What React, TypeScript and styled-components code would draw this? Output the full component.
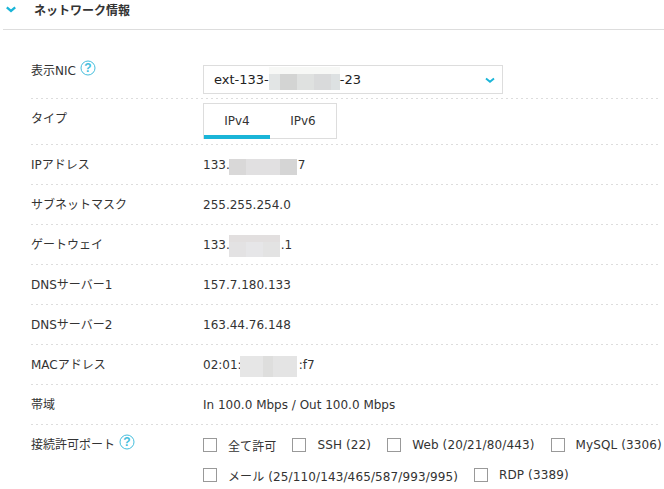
import React from 'react';
import styled, { createGlobalStyle } from 'styled-components';

const GlobalStyle = createGlobalStyle`
  html, body { margin: 0; padding: 0; background: #fff; }
  body {
    font-family: "DejaVu Sans", "Noto Sans CJK JP", sans-serif;
    font-size: 12px;
    color: #333;
  }
`;

const Page = styled.div`
  width: 664px;
  height: 489px;
  overflow: hidden;
`;

const Header = styled.div`
  display: flex;
  align-items: center;
  height: 30px;
  margin-left: 3px;
  padding-bottom: 11px;
  box-sizing: border-box;
  border-bottom: 1px solid #ddd;
`;

const HeaderIcon = styled.svg`
  width: 10px;
  height: 7px;
  margin-left: 3px;
`;

const Title = styled.h2`
  margin: 0 0 0 18px;
  font-size: 12px;
  font-weight: bold;
  color: #333;
`;

const Body = styled.div`
  padding: 25px 3px 0 31px;
`;

const Row = styled.div<{ $h: number; $last?: boolean }>`
  display: flex;
  height: ${(p) => p.$h}px;
  box-sizing: border-box;
  background: ${(p) =>
    p.$last ? 'none' : 'repeating-linear-gradient(90deg, #ddd 0 2px, transparent 2px 5px) bottom / 100% 1px no-repeat'};
`;

const Label = styled.div<{ $top?: number }>`
  display: flex;
  align-items: flex-start;
  width: 172px;
  flex-shrink: 0;
  padding-top: ${(p) => p.$top ?? 13}px;
  line-height: 14px;
`;

const HelpIcon = styled.svg`
  width: 16px;
  height: 16px;
  margin-left: 4px;
  margin-top: -4px;
`;

const Value = styled.div`
  display: flex;
  align-items: flex-start;
  padding-top: 13px;
  line-height: 14px;
  white-space: nowrap;
`;

const Select = styled.div`
  display: flex;
  align-items: center;
  justify-content: space-between;
  width: 300px;
  height: 29px;
  margin-top: -3px;
  padding: 0 7px 0 10px;
  box-sizing: border-box;
  border: 1px solid #ddd;
  font-size: 13px;
  color: #222;
`;

const SelectText = styled.span`
  display: flex;
`;

const SelectIcon = styled.svg`
  width: 10px;
  height: 7px;
  margin-top: 2px;
`;

const Tabs = styled.div`
  display: flex;
  width: 134px;
  height: 36px;
  margin-top: -9px;
  box-sizing: border-box;
  border: 1px solid #ddd;
`;

const Tab = styled.div<{ $active?: boolean }>`
  width: 66px;
  padding-top: 10px;
  box-sizing: border-box;
  text-align: center;
  border-bottom: 4px solid ${(p) => (p.$active ? '#1ab5d8' : 'transparent')};
  margin-bottom: -1px;
`;

// 個人情報のぼかし
const Redacted = styled.span<{ $w: number; $h: number; $top: number; $side?: number; $bg: string }>`
  display: inline-block;
  flex-shrink: 0;
  width: ${(p) => p.$w}px;
  height: ${(p) => p.$h}px;
  margin: ${(p) => p.$top}px ${(p) => p.$side ?? 0}px -20px ${(p) => -(p.$side ?? 0)}px;
  background: ${(p) => p.$bg};
`;

const Ports = styled.div`
  display: flex;
  flex-direction: column;
  gap: 14px;
  padding-top: 12px;
  letter-spacing: 0.12px;
`;

const PortLine = styled.div`
  display: flex;
  align-items: center;
  height: 16px;
`;

const Port = styled.label`
  display: flex;
  align-items: center;
  margin-right: 16px;
  white-space: nowrap;
`;

const Box = styled.span`
  width: 14px;
  height: 14px;
  margin-right: 11px;
  box-sizing: border-box;
  border: 1px solid #999;
`;

const Help = () => (
  <HelpIcon viewBox="0 0 16 16">
    <circle cx="8" cy="8" r="7" fill="none" stroke="#45bedd" strokeWidth="1" />
    <text x="8" y="12.4" fontSize="12" fontWeight="bold" fontFamily="Liberation Sans" textAnchor="middle" fill="#45bedd">?</text>
  </HelpIcon>
);

const nicBg = 'linear-gradient(#f7f8f6 0 7px, transparent 7px), linear-gradient(90deg, #e2e5e5 0 11px, #d3d4d3 11px 28px, #dfe1e0 28px 45px, #d9dadb 45px 62px, #dde1e2 62px)';
const ipBg = 'linear-gradient(90deg, #d9d8d8 0 17px, #e1e0e1 17px 51px, #d5d5d5 51px)';
const gwBg = 'linear-gradient(#e2dfdf 0 7px, transparent 7px), linear-gradient(90deg, #e3e2e3 0 17px, #e6e6e8 17px 34px, #e3e3e3 34px)';
const macBg = 'linear-gradient(90deg, #e6e6e6 0 23px, #dededd 23px 33px, #e4e4e4 33px)';

const portLines = [
  ['全て許可', 'SSH (22)', 'Web (20/21/80/443)', 'MySQL (3306)'],
  ['メール (25/110/143/465/587/993/995)', 'RDP (3389)'],
];

export default function App() {
  return (
    <Page>
      <GlobalStyle />
      <Header>
        <HeaderIcon viewBox="0 0 10 7">
          <path d="M0.8 1.3 L5 4.9 L9.2 1.3" fill="none" stroke="#1ab5d8" strokeWidth="2.3" />
        </HeaderIcon>
        <Title>ネットワーク情報</Title>
      </Header>
      <Body>
        <Row $h={44}>
          <Label $top={9}>表示NIC<Help /></Label>
          <Value>
            <Select>
              <SelectText>
                ext-133-<Redacted $w={71} $h={23} $top={-6} $bg={nicBg} />-23
              </SelectText>
              <SelectIcon viewBox="0 0 10 7">
                <path d="M1 1.5 L5 4.8 L9 1.5" fill="none" stroke="#1ab5d8" strokeWidth="1.9" />
              </SelectIcon>
            </Select>
          </Value>
        </Row>
        <Row $h={46}>
          <Label>タイプ</Label>
          <Value>
            <Tabs>
              <Tab $active>IPv4</Tab>
              <Tab>IPv6</Tab>
            </Tabs>
          </Value>
        </Row>
        <Row $h={40}>
          <Label>IPアドレス</Label>
          <Value>133.<Redacted $w={68} $h={16} $top={1} $side={1} $bg={ipBg} />7</Value>
        </Row>
        <Row $h={40}>
          <Label>サブネットマスク</Label>
          <Value>255.255.254.0</Value>
        </Row>
        <Row $h={40}>
          <Label>ゲートウェイ</Label>
          <Value>133.<Redacted $w={51} $h={22} $top={-3} $side={1} $bg={gwBg} />.1</Value>
        </Row>
        <Row $h={40}>
          <Label>DNSサーバー1</Label>
          <Value>157.7.180.133</Value>
        </Row>
        <Row $h={40}>
          <Label>DNSサーバー2</Label>
          <Value>163.44.76.148</Value>
        </Row>
        <Row $h={40}>
          <Label>MACアドレス</Label>
          <Value>02:01:<Redacted $w={57} $h={21} $top={-2} $side={2} $bg={macBg} />:f7</Value>
        </Row>
        <Row $h={40}>
          <Label>帯域</Label>
          <Value>In 100.0 Mbps / Out 100.0 Mbps</Value>
        </Row>
        <Row $h={65} $last>
          <Label>接続許可ポート<Help /></Label>
          <Ports>
            {portLines.map((line) => (
              <PortLine key={line[0]}>
                {line.map((p) => (
                  <Port key={p}><Box />{p}</Port>
                ))}
              </PortLine>
            ))}
          </Ports>
        </Row>
      </Body>
    </Page>
  );
}
